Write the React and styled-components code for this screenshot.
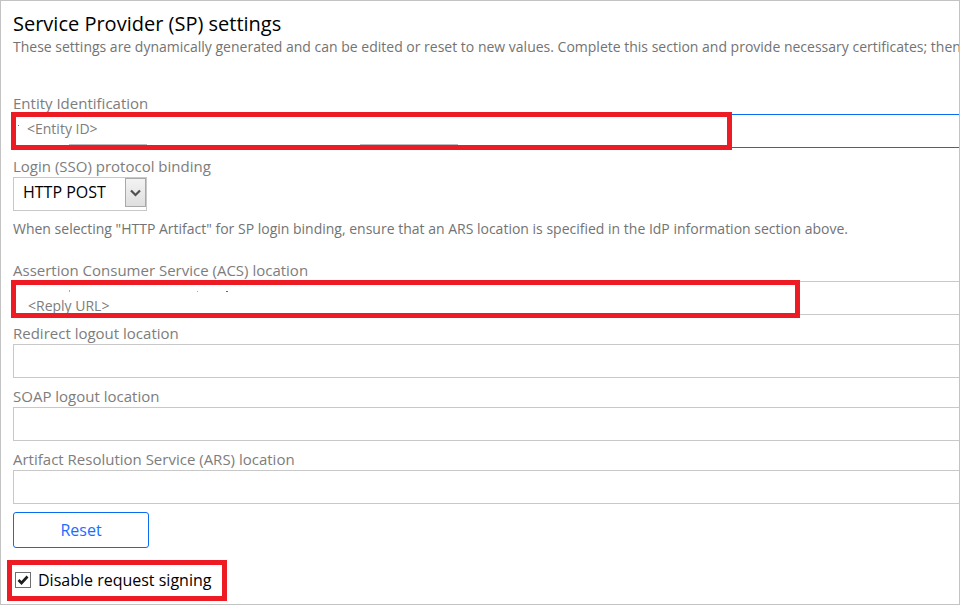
import React, { useState } from "react";
import styled, { createGlobalStyle } from "styled-components";

const GlobalStyle = createGlobalStyle`
  * { box-sizing: border-box; }
  body {
    margin: 0;
    background: #fff;
    color: #000;
    font-family: "Open Sans", "Noto Sans", sans-serif;
  }
`;

const Panel = styled.main`
  display: flex;
  flex-direction: column;
  gap: 8px;
  min-height: 100vh;
  padding: 11px 0 2px 12px;
  overflow: hidden;
  border: 1px solid #c3c3c3;
`;

const Header = styled.header`
  display: flex;
  flex-direction: column;
  gap: 1px;
  padding-bottom: 28px;
  white-space: nowrap;
`;

const Title = styled.h1`
  margin: 0;
  font-size: 20px;
  line-height: 24px;
  font-weight: 400;
`;

const Note = styled.p`
  margin: 0;
  font-size: 14px;
  line-height: 20px;
  color: #737373;
`;

const BindingNote = styled(Note)`
  padding-bottom: 13px;
`;

const Field = styled.div`
  display: flex;
  flex-direction: column;
  align-items: stretch;
`;

const Label = styled.label`
  font-size: 15px;
  line-height: 21px;
  color: #7d7d7d;
`;

const Control = styled.div`
  position: relative;
  display: flex;
`;

const TextInput = styled.input`
  flex: 1;
  min-width: 0;
  height: 34px;
  margin: 0;
  padding: ${(p) => (p.$low ? "14px 14px 0" : "0 13px 5px")};
  border: 1px solid ${(p) => (p.$active ? "#0a6cf0" : "#c8c8c8")};
  border-right: 0;
  border-radius: 0;
  background: #fff;
  color: #7d7d7d;
  font: 14px "Open Sans", "Noto Sans", sans-serif;
  outline: none;
`;

const Highlight = styled.div`
  position: absolute;
  top: ${(p) => p.$top}px;
  left: -2px;
  width: ${(p) => p.$width};
  height: 38px;
  border: 5px solid #ed1c24;
  pointer-events: none;
`;

const Remnants = styled.svg`
  display: block;
  overflow: visible;
`;

const SelectBox = styled.div`
  position: relative;
  display: flex;
  align-self: flex-start;
  width: 134px;
  height: 34px;
  border: 1px solid #c8c8c8;
`;

const Select = styled.select`
  flex: 1;
  min-width: 0;
  appearance: none;
  margin: 0;
  padding: 0 22px 4px 9px;
  border: 0;
  border-radius: 0;
  background: #fff;
  color: #000;
  font: 16px "Open Sans", "Noto Sans", sans-serif;
`;

const SelectArrow = styled.span`
  position: absolute;
  top: 0;
  right: 0;
  display: flex;
  align-items: center;
  justify-content: center;
  width: 21px;
  height: 29px;
  border: 1px solid #a9a9a9;
  background: linear-gradient(#f3f3f3, #dfdfdf);
  pointer-events: none;
`;

const ResetButton = styled.button`
  align-self: flex-start;
  width: 136px;
  height: 36px;
  padding: 0;
  border: 1px solid #0a6cf0;
  border-radius: 3px;
  background: #fff;
  color: #1a6dff;
  font: 16px "Open Sans", "Noto Sans", sans-serif;
`;

const SigningOption = styled.label`
  display: flex;
  align-items: center;
  align-self: flex-start;
  gap: 7px;
  margin: 4px 0 0 -6px;
  width: 220px;
  height: 41px;
  padding: 0 0 2px 3px;
  border: 5px solid #ed1c24;
  font-size: 16px;
  white-space: nowrap;
`;

const CheckWrap = styled.span`
  position: relative;
  display: flex;
`;

const Checkbox = styled.input`
  appearance: none;
  width: 16px;
  height: 16px;
  margin: 0;
  border: 1px solid #6f6f6f;
  background: #fff;
  &:checked + svg { visibility: visible; }
`;

const CheckMark = styled.svg`
  position: absolute;
  inset: 0;
  visibility: hidden;
  pointer-events: none;
`;

function TextField({ id, label, initial = "", active, low, children }) {
  const [value, setValue] = useState(initial);
  return (
    <Field>
      <Label htmlFor={id}>{label}</Label>
      <Control>
        <TextInput
          id={id}
          type="text"
          value={value}
          $active={active}
          $low={low}
          onChange={(e) => setValue(e.target.value)}
        />
        {children}
      </Control>
    </Field>
  );
}

export default function App() {
  const [signing, setSigning] = useState(true);
  return (
    <>
      <GlobalStyle />
      <Panel>
        <Header>
          <Title>Service Provider (SP) settings</Title>
          <Note>
            These settings are dynamically generated and can be edited or reset to new values. Complete this section and
            provide necessary certificates; then dow
          </Note>
        </Header>

        <TextField id="entity" label="Entity Identification" initial="<Entity ID>" active>
          <Highlight $top={-2} $width="721px">
            <Remnants width="711" height="28" aria-hidden="true">
              <path d="M53 27.5h78M344 27.5h98" stroke="#b9bcc0" />
              <path d="M2 8h1v1h-1z" fill="#777" />
            </Remnants>
          </Highlight>
        </TextField>

        <Field>
          <Label htmlFor="binding">Login (SSO) protocol binding</Label>
          <SelectBox>
            <Select id="binding" defaultValue="post">
              <option value="post">HTTP POST</option>
              <option value="artifact">HTTP Artifact</option>
            </Select>
            <SelectArrow>
              <svg width="11" height="8" viewBox="0 0 11 8" aria-hidden="true">
                <path d="M1 1.5L5.500 6L10 1.500" fill="none" stroke="#505050" strokeWidth="2.200" />
              </svg>
            </SelectArrow>
          </SelectBox>
        </Field>

        <BindingNote>
          When selecting "HTTP Artifact" for SP login binding, ensure that an ARS location is specified in the IdP
          information section above.
        </BindingNote>

        <TextField id="acs" label="Assertion Consumer Service (ACS) location" initial="<Reply URL>" low>
          <Highlight $top={-1} $width="789px">
            <Remnants width="779" height="28" aria-hidden="true">
              <path d="M53 5h1v2h-1zM181 6h1v1h-1z" fill="#aaa" />
              <path d="M210 6h2v1h-2z" fill="#666" />
            </Remnants>
          </Highlight>
        </TextField>
        <TextField id="redirect" label="Redirect logout location" />
        <TextField id="soap" label="SOAP logout location" />
        <TextField id="ars" label="Artifact Resolution Service (ARS) location" />

        <ResetButton type="button">Reset</ResetButton>

        <SigningOption>
          <CheckWrap>
            <Checkbox type="checkbox" checked={signing} onChange={(e) => setSigning(e.target.checked)} />
            <CheckMark width="16" height="16" viewBox="0 0 16 16" aria-hidden="true">
              <path d="M3.500 8L6.500 11L12.500 4.500" fill="none" stroke="#1c1c1c" strokeWidth="2.600" />
            </CheckMark>
          </CheckWrap>
          Disable request signing
        </SigningOption>
      </Panel>
    </>
  );
}
